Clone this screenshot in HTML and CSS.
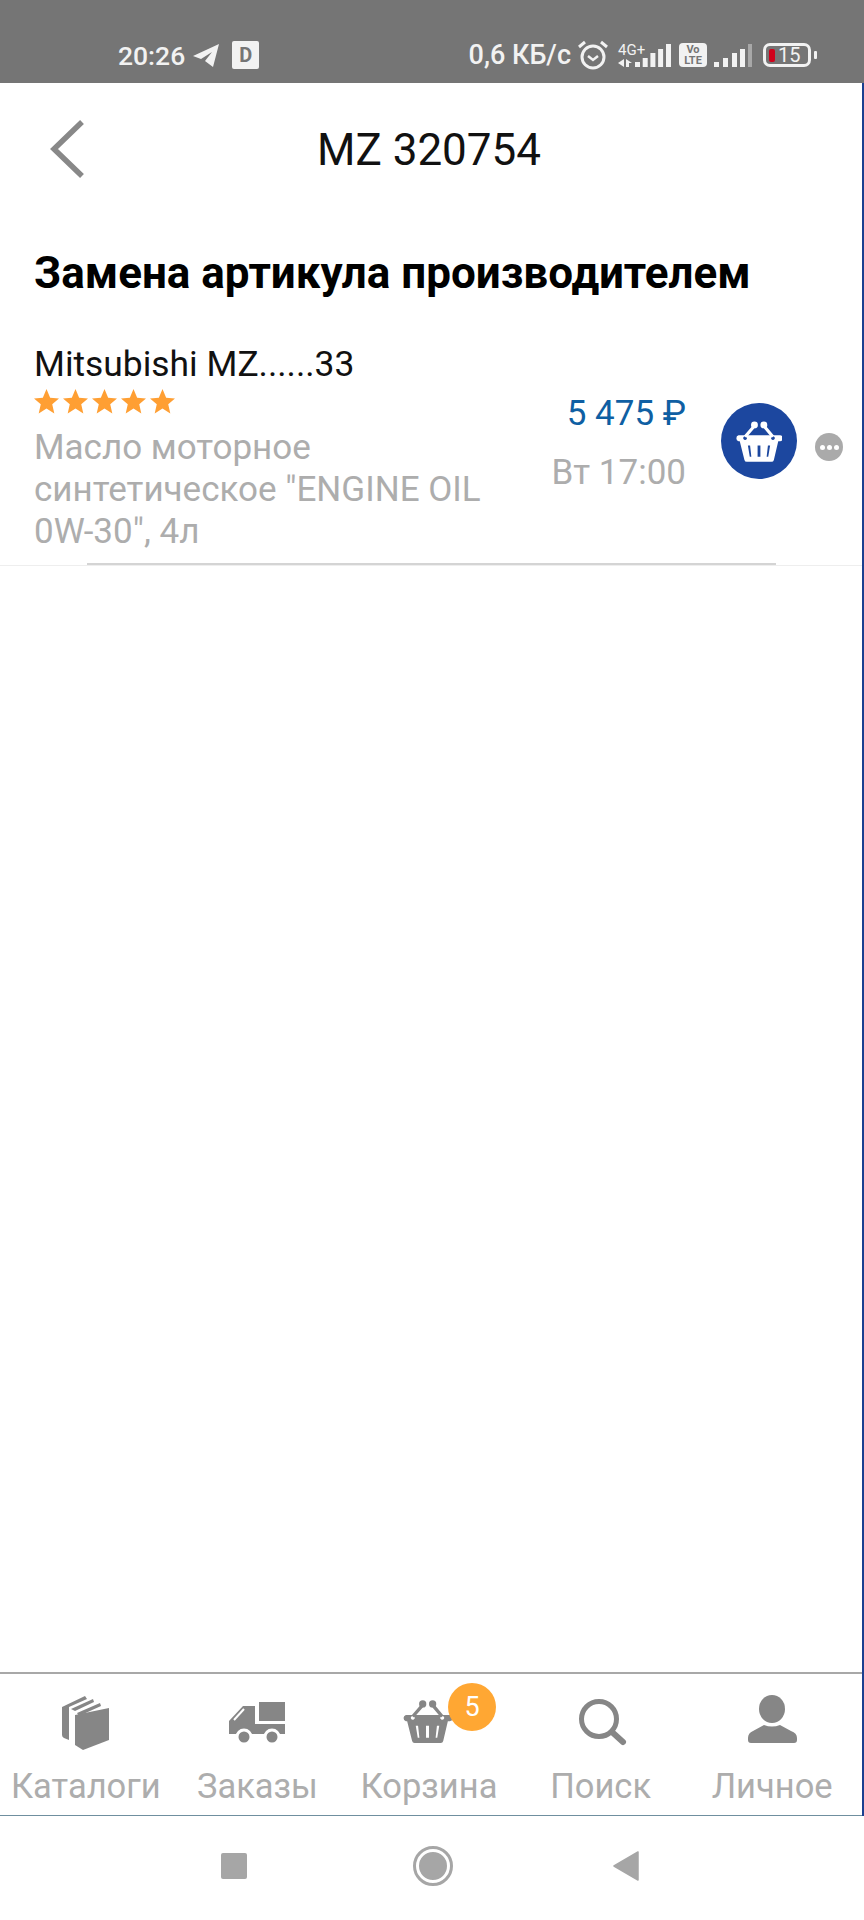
FILE: index.html
```html
<!DOCTYPE html>
<html lang="en">
<head>
    <meta charset="UTF-8">
    <meta name="viewport" content="width=device-width, initial-scale=1.0">
    <title>MZ 320754</title>
    <link rel="stylesheet" href="styles.css">
</head>
<body>
    <svg class="defs" width="0" height="0">
        <symbol id="basket" viewBox="0 0 147 130">
            <path fill-rule="evenodd" d="M8 45H139a9 9 0 0 1 2 19h-6l-14 60a8 8 0 0 1-8 6H35a8 8 0 0 1-8-6L12 64H8a10 10 0 0 1 0-19zM29 48a6 6 0 1 0 .1 0zM118 48a6 6 0 1 0 .1 0zM38 78l7 0 4 36-5 0zM69 78h9v36h-9zM102 78l7 0-6 36-5 0z"/>
            <path d="M29 50L60 14M118 50L88 14" fill="none" stroke="currentColor" stroke-width="10"/>
            <circle cx="59" cy="12" r="11"/>
            <circle cx="89" cy="12" r="11"/>
        </symbol>
    </svg>

    <div class="status">
        <div class="status-left">
            <span class="time">20:26</span>
            <svg class="tg" viewBox="0 0 26 23"><path d="M0 12L26 0l-6 23-8-6 7-9-11 7z" fill="#f2f2f2"/></svg>
            <span class="d-badge">D</span>
        </div>
        <div class="status-right">
            <span class="speed">0,6 КБ/с</span>
            <svg class="alarm" viewBox="0 0 30 30" fill="none" stroke="#f2f2f2">
                <circle cx="15" cy="17" r="11" stroke-width="3"/>
                <path d="M10 16l5 4 5-4" stroke-width="2.500"/>
                <path d="M1 7l6-5M29 7l-6-5" stroke-width="3"/>
            </svg>
            <span class="net">
                <span class="net-label">4G+</span>
                <svg class="arrows" viewBox="0 0 15 8" fill="#f2f2f2"><path d="M6 0v8L0 4zM8 0l6 4h-3v4H8z"/></svg>
            </span>
            <svg class="bars" viewBox="0 0 36 23" fill="#f2f2f2">
                <rect x="0" y="18" width="5" height="5"/><rect x="7.700" y="14" width="5" height="9"/><rect x="15.400" y="9" width="5" height="14"/><rect x="23.100" y="5" width="5" height="18"/><rect x="31" y="0" width="5" height="23"/>
            </svg>
            <span class="volte">Vo<br>LTE</span>
            <svg class="bars bars-2" viewBox="0 0 38 23" fill="#f2f2f2">
                <rect x="0" y="18" width="5" height="5"/><rect x="9" y="14" width="5" height="9"/><rect x="18" y="9" width="5" height="14"/><rect x="26" y="5" width="5" height="18"/><rect x="34" y="0" width="4" height="23" fill="#a8a8a8"/>
            </svg>
            <span class="battery"><i class="battery-low"></i>15</span>
            <i class="battery-tip"></i>
        </div>
    </div>

    <div class="screen">
        <div class="header">
            <svg class="back" viewBox="0 0 36 60" fill="none"><path d="M33 3L5 30l28 27" stroke="#888" stroke-width="5.500"/></svg>
            <div class="title">MZ 320754</div>
        </div>

        <h1 class="heading">Замена артикула производителем</h1>

        <div class="item">
            <div class="item-info">
                <div class="item-name">Mitsubishi MZ......33</div>
                <div class="stars">
                    <svg viewBox="0 0 24 24"><path d="M12 0l3.500 8.300 8.500.7-6.500 5.700 2 8.800L12 18.800 4.500 23.500l2-8.800L0 9l8.500-.7z"/></svg>
                    <svg viewBox="0 0 24 24"><path d="M12 0l3.500 8.300 8.500.7-6.500 5.700 2 8.800L12 18.800 4.500 23.500l2-8.800L0 9l8.500-.7z"/></svg>
                    <svg viewBox="0 0 24 24"><path d="M12 0l3.500 8.300 8.500.7-6.500 5.700 2 8.800L12 18.800 4.500 23.500l2-8.800L0 9l8.500-.7z"/></svg>
                    <svg viewBox="0 0 24 24"><path d="M12 0l3.500 8.300 8.500.7-6.500 5.700 2 8.800L12 18.800 4.500 23.500l2-8.800L0 9l8.500-.7z"/></svg>
                    <svg viewBox="0 0 24 24"><path d="M12 0l3.500 8.300 8.500.7-6.500 5.700 2 8.800L12 18.800 4.500 23.500l2-8.800L0 9l8.500-.7z"/></svg>
                </div>
                <div class="item-desc">Масло моторное<br>синтетическое "ENGINE OIL<br>0W-30", 4л</div>
            </div>
            <div class="item-offer">
                <div class="price">5 475 ₽</div>
                <div class="delivery">Вт 17:00</div>
            </div>
            <button class="cart-btn">
                <svg class="cart-icon"><use href="#basket"/></svg>
            </button>
            <div class="more"><i></i><i></i><i></i></div>
        </div>
        <div class="item-line"></div>

        <div class="spacer"></div>

        <div class="tabs">
            <div class="tab">
                <svg class="tab-icon" viewBox="0 0 60 56" fill="#868686">
                    <path d="M6 12L29 1l2 3-18 8v33l-5-2q-2-1-2-3z"/>
                    <path d="M15 14L37 4l1 3-19 9z"/>
                    <path d="M21 18L44 8l1 3-22 10z"/>
                    <path d="M19 20l34-7v32l-26 10-8-5z"/>
                </svg>
                <span>Каталоги</span>
            </div>
            <div class="tab">
                <svg class="tab-icon" viewBox="0 0 60 56" fill="#868686">
                    <rect x="32" y="7" width="26" height="19"/>
                    <path d="M16 11h12v18h30v10H2V26z"/>
                    <path d="M7 25L17 14" stroke="#fff" stroke-width="2"/>
                    <circle cx="17" cy="42" r="7" stroke="#fff" stroke-width="3"/>
                    <circle cx="45" cy="42" r="7" stroke="#fff" stroke-width="3"/>
                </svg>
                <span>Заказы</span>
            </div>
            <div class="tab">
                <svg class="tab-icon basket-icon"><use href="#basket"/></svg>
                <span>Корзина</span>
                <div class="badge">5</div>
            </div>
            <div class="tab">
                <svg class="tab-icon" viewBox="0 0 60 56" fill="none" stroke="#868686">
                    <circle cx="28" cy="24" r="17.500" stroke-width="5"/>
                    <path d="M41 37l11 10" stroke-width="6" stroke-linecap="round"/>
                </svg>
                <span>Поиск</span>
            </div>
            <div class="tab">
                <svg class="tab-icon" viewBox="0 0 60 56" fill="#868686">
                    <ellipse cx="30" cy="14" rx="13" ry="14"/>
                    <path d="M6 43q0-5 5-7l11-6q8 3 16 0l11 6q6 2 6 7v2q0 3-3 3H9q-3 0-3-3z"/>
                </svg>
                <span>Личное</span>
            </div>
        </div>
    </div>

    <div class="sysnav">
        <div class="sys-square"></div>
        <div class="sys-home"></div>
        <svg class="sys-back" viewBox="0 0 26 30"><path d="M25 1v28L1 15z" fill="#a6a6a6" stroke="#a6a6a6" stroke-width="1.500" stroke-linejoin="round"/></svg>
    </div>
</body>
</html>
```

FILE: styles.css
```css
* {
    box-sizing: border-box;
}
body {
    font-family: Roboto, "Liberation Sans", sans-serif;
    margin: 0;
    width: 864px;
    height: 1920px;
    display: flex;
    flex-direction: column;
    background-color: #fff;
    overflow: hidden;
}
.defs {
    position: absolute;
}

/* status bar */
.status {
    height: 83px;
    background-color: #757575;
    color: #f2f2f2;
    display: flex;
    justify-content: space-between;
    align-items: flex-end;
    padding: 0 47px 13px 118px;
    flex-shrink: 0;
}
.status-left, .status-right {
    display: flex;
    align-items: center;
    height: 30px;
}
.time {
    font-size: 26.500px;
    font-weight: 500;
}
.tg {
    width: 26px;
    height: 23px;
    margin-left: 8px;
}
.d-badge {
    width: 27px;
    height: 28px;
    margin-left: 13px;
    background-color: #f2f2f2;
    color: #757575;
    border-radius: 2px;
    font-size: 20px;
    font-weight: 700;
    line-height: 28px;
    text-align: center;
}
.speed {
    font-size: 27px;
    font-weight: 500;
    margin-right: 7px;
    white-space: nowrap;
}
.alarm {
    width: 30px;
    height: 30px;
}
.net {
    display: flex;
    flex-direction: column;
    width: 17px;
    margin-left: 10px;
    align-items: flex-start;
}
.net-label {
    font-size: 15px;
    line-height: 15px;
    white-space: nowrap;
}
.arrows {
    width: 15px;
    height: 8px;
    margin-top: 1px;
}
.bars {
    width: 36px;
    height: 23px;
    margin-top: 1px;
}
.volte {
    width: 28px;
    height: 24px;
    margin-left: 8px;
    background-color: #f2f2f2;
    color: #757575;
    border-radius: 4px;
    font-size: 11px;
    font-weight: 700;
    line-height: 11px;
    text-align: center;
    padding-top: 1px;
}
.bars-2 {
    width: 38px;
    margin-left: 7px;
}
.battery {
    width: 48px;
    height: 24px;
    margin-left: 11px;
    border: 3px solid #f2f2f2;
    border-radius: 7px;
    display: flex;
    align-items: center;
    font-size: 20px;
    padding-left: 3px;
}
.battery-low {
    width: 6px;
    height: 13px;
    background-color: #d0021b;
    border-radius: 2px;
    margin-right: 3px;
}
.battery-tip {
    width: 3px;
    height: 8px;
    margin-left: 3px;
    background-color: #f2f2f2;
    border-radius: 1px;
}

/* page */
.screen {
    flex: 1;
    display: flex;
    flex-direction: column;
    border-right: 2px solid #1b4090;
    min-height: 0;
}
.header {
    height: 134px;
    display: flex;
    align-items: center;
    justify-content: center;
    position: relative;
}
.back {
    position: absolute;
    left: 49px;
    top: 36px;
    width: 36px;
    height: 60px;
}
.title {
    font-size: 44px;
    color: #111;
    margin-right: 4px;
}
.heading {
    font-size: 44px;
    font-weight: 700;
    color: #000;
    line-height: 44px;
    margin: 34px 0 0 34px;
    white-space: nowrap;
}
.item {
    display: flex;
    align-items: flex-start;
    margin-top: 49px;
    padding-left: 34px;
    height: 219px;
}
.item-info {
    width: 490px;
}
.item-name {
    font-size: 35.400px;
    line-height: 40px;
    color: #111;
}
.stars {
    display: flex;
    gap: 4px;
    margin-top: 5px;
}
.stars svg {
    width: 25px;
    height: 25px;
    fill: #ff9f33;
}
.item-desc {
    font-size: 35px;
    line-height: 42px;
    color: #adadad;
    margin-top: 13px;
}
.item-offer {
    width: 162px;
    text-align: right;
    padding-top: 50px;
}
.price {
    font-size: 35px;
    line-height: 40px;
    color: #0f5fa3;
}
.delivery {
    font-size: 35px;
    line-height: 40px;
    color: #adadad;
    margin-top: 19px;
}
.cart-btn {
    width: 76px;
    height: 76px;
    border: 0;
    padding: 0;
    border-radius: 50%;
    background-color: #1c479f;
    color: #fff;
    margin: 59px 0 0 35px;
    display: flex;
    align-items: center;
    justify-content: center;
}
.cart-icon {
    width: 46px;
    height: 41px;
    fill: #fff;
}
.more {
    width: 28px;
    height: 28px;
    border-radius: 50%;
    background-color: #aaa;
    margin: 89px 0 0 18px;
    display: flex;
    align-items: center;
    justify-content: center;
    gap: 2px;
}
.more i {
    width: 5px;
    height: 5px;
    border-radius: 50%;
    background-color: #fff;
}
.item-line {
    height: 3px;
    border-bottom: 1px solid #eee;
}
.item-line::before {
    content: "";
    display: block;
    height: 2px;
    margin: 0 86px 0 87px;
    background-color: #d4d4d4;
}
.spacer {
    flex: 1;
}

/* bottom tabs */
.tabs {
    height: 144px;
    border-top: 2px solid #a8a8a8;
    border-bottom: 1px solid #6f8f9f;
    display: flex;
    padding-right: 4px;
    flex-shrink: 0;
}
.tab {
    flex: 1;
    position: relative;
    display: flex;
    flex-direction: column;
    align-items: center;
    color: #adadad;
    font-size: 34.500px;
}
.tab-icon {
    height: 56px;
    width: 60px;
    margin-top: 21px;
    overflow: visible;
}
.tab span {
    position: absolute;
    bottom: 9px;
    white-space: nowrap;
}
.basket-icon {
    fill: #868686;
    color: #868686;
    width: 49px;
    height: 43px;
    margin-top: 26px;
    margin-right: 3px;
}
.badge {
    position: absolute;
    left: 105px;
    top: 9px;
    width: 48px;
    height: 48px;
    border-radius: 50%;
    background-color: #ffa733;
    color: #fff;
    font-size: 27px;
    line-height: 48px;
    text-align: center;
}

/* android buttons */
.sysnav {
    height: 104px;
    flex-shrink: 0;
    display: flex;
    justify-content: center;
    align-items: center;
    gap: 163px;
    padding: 0 5px 4px 0;
}
.sys-square {
    width: 26px;
    height: 26px;
    margin-right: 3px;
    background-color: #a6a6a6;
    border-radius: 2px;
}
.sys-home {
    width: 40px;
    height: 40px;
    border-radius: 50%;
    background-color: #a6a6a6;
    border: 6px solid #fff;
    outline: 3px solid #a6a6a6;
    outline-offset: -3px;
}
.sys-back {
    width: 26px;
    height: 30px;
    margin-left: -3px;
}
```
